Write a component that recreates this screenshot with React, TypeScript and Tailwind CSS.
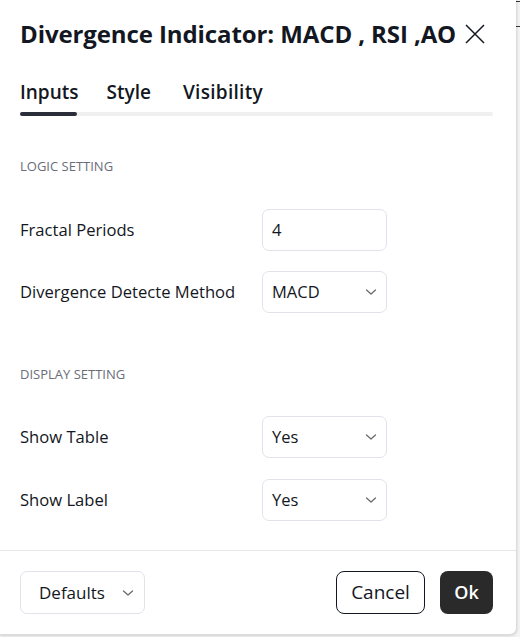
import React from "react";

const Chevron = () => (
  <svg width="12" height="8" viewBox="0 0 12 8" fill="none" className="shrink-0">
    <path d="M1.5 2l4.5 4 4.5-4" stroke="#6b6b6b" strokeWidth="1.3" strokeLinecap="round" strokeLinejoin="round" />
  </svg>
);

const Select = ({ value }: { value: string }) => (
  <div className="w-[125px] h-[42px] border border-[#e0e3eb] rounded-[7px] flex items-center justify-between pl-[9px] pr-[9px] text-[16.5px] text-[#131722]">
    <span>{value}</span>
    <Chevron />
  </div>
);

const Row = ({ label, children, className }: { label: string; children: React.ReactNode; className?: string }) => (
  <div className={"flex items-center h-[42px] " + (className ?? "")}>
    <div className="w-[242px] text-[16.6px] text-[#131722]">{label}</div>
    {children}
  </div>
);

export default function App() {
  return (
    <div
      className="w-[520px] h-[637px] bg-[#f4f4f6] relative overflow-hidden"
      style={{ fontFamily: '"Open Sans", "Noto Sans", sans-serif' }}
    >
      <div className="absolute right-0 top-0 w-[4px] h-full flex flex-col">
        <div className="h-[1px] bg-[#333] mt-[1px]" />
        <div className="h-[1px] bg-[#333] mt-[24px]" />
      </div>
      <div className="w-[517px] h-[635px] bg-white border-r border-b border-[#dcdcdc] rounded-br-[7px] shadow-[0_1px_3px_rgba(0,0,0,0.15)] flex flex-col">
        <div className="h-[40px] mt-[14px] px-5 flex items-center justify-between">
          <div className="text-[24px] font-bold text-[#131722] tracking-[-0.1px] whitespace-nowrap">
            Divergence Indicator: MACD , RSI ,AO
          </div>
          <svg width="22" height="22" viewBox="0 0 22 22" fill="none" className="mr-[10px]">
            <path d="M2 2l18 18M20 2L2 20" stroke="#131722" strokeWidth="1.5" />
          </svg>
        </div>
        <div className="px-5 mt-[20px]">
          <div className="flex items-center h-[36px] text-[19px] font-semibold text-[#131722]">
            <span>Inputs</span>
            <span className="ml-[28px]">Style</span>
            <span className="ml-[32px] tracking-[0.3px]">Visibility</span>
          </div>
          <div className="h-[4px] w-[473px] bg-[#f0f0f0] rounded-full mt-[2px]">
            <div className="h-[4px] w-[57px] bg-[#2a2e39] rounded-full" />
          </div>
        </div>
        <div className="px-5">
          <div className="mt-[43px] h-[16px] flex items-center text-[13px] text-[#6a6d78] uppercase">Logic Setting</div>
          <Row label="Fractal Periods" className="mt-[34px]">
            <div className="w-[125px] h-[42px] border border-[#e0e3eb] rounded-[7px] flex items-center pl-[9px] text-[16.5px] text-[#131722]">
              4
            </div>
          </Row>
          <Row label="Divergence Detecte Method" className="mt-[20px]">
            <Select value="MACD" />
          </Row>
          <div className="mt-[54px] h-[16px] flex items-center text-[13px] text-[#6a6d78] uppercase">Display Setting</div>
          <Row label="Show Table" className="mt-[33px]">
            <Select value="Yes" />
          </Row>
          <Row label="Show Label" className="mt-[21px]">
            <Select value="Yes" />
          </Row>
        </div>
        <div className="mt-[29px] border-t border-[#e6e6e6]" />
        <div className="px-5 mt-[20px] flex items-center justify-between">
          <div className="w-[125px] h-[43px] border border-[#e0e3eb] rounded-[7px] flex items-center justify-between pl-[18px] pr-[10px] text-[17px] text-[#131722]">
            <span>Defaults</span>
            <Chevron />
          </div>
          <div className="flex items-center gap-[15px] mr-[3px]">
            <div className="w-[89px] h-[43px] border border-[#131722] rounded-[8px] flex items-center justify-center text-[19px] text-[#131722]">
              Cancel
            </div>
            <div className="w-[53px] h-[43px] bg-[#2a2a2a] rounded-[8px] flex items-center justify-center text-[18px] font-semibold text-white">
              Ok
            </div>
          </div>
        </div>
      </div>
    </div>
  );
}
